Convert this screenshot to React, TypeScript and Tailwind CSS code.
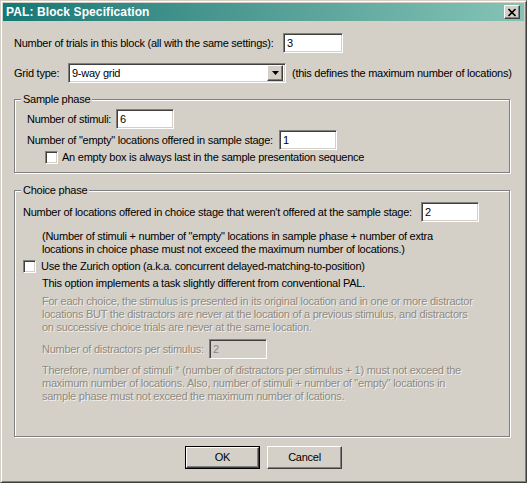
import React from "react";

const edit =
  "border border-t-[#808080] border-l-[#808080] border-b-white border-r-white shadow-[inset_1px_1px_0_#404040,inset_-1px_-1px_0_#d4d0c8]";
const raised =
  "border border-t-white border-l-white border-b-[#404040] border-r-[#404040] shadow-[inset_-1px_-1px_0_#808080]";
const etched =
  "border border-[#808080] shadow-[inset_1px_1px_0_#ffffff,1px_1px_0_#ffffff]";
const dis = "text-[#8e8a82] [text-shadow:1px_1px_0_#f4f2ee]";

function Edit({ value, w, disabled }: { value: string; w: string; disabled?: boolean }) {
  return (
    <div
      className={`${edit} ${w} h-[20px] flex items-center pl-[3px] ${
        disabled ? "bg-[#d4d0c8] text-[#8e8a82]" : "bg-white"
      }`}
    >
      {value}
    </div>
  );
}

function Check() {
  return <div className={`${edit} w-[13px] h-[13px] bg-white shrink-0`} />;
}

export default function App() {
  return (
    <div className="w-[527px] h-[483px] bg-[#d4d0c8] font-['Liberation_Sans',Arial,sans-serif] text-[11px] leading-[13px] tracking-[-0.25px] text-black">
      <div className="w-full h-full border border-t-[#d4d0c8] border-l-[#d4d0c8] border-b-[#404040] border-r-[#404040] shadow-[inset_1px_1px_0_#ffffff,inset_-1px_-1px_0_#808080] p-[2px] flex flex-col">
        {/* Title bar */}
        <div className="h-[18px] flex items-center bg-linear-to-r from-[#127876] to-[#84c4b6] pl-[3px] pr-[4px]">
          <span className="flex-1 text-white font-bold text-[12px] tracking-[0.1px]">
            PAL: Block Specification
          </span>
          <div className={`${raised} bg-[#d4d0c8] w-[16px] h-[14px] flex items-center justify-center`}>
            <svg width="10" height="9" viewBox="0 0 10 9">
              <path d="M1.5 1 L8.5 8 M8.5 1 L1.5 8" stroke="#000" strokeWidth="1.7" />
            </svg>
          </div>
        </div>

        <div className="pl-[11px] flex flex-col">
          {/* Row 1 */}
          <div className="mt-[12px] h-[20px] flex items-center">
            <span className="w-[269px]">Number of trials in this block (all with the same settings):</span>
            <Edit value="3" w="w-[60px]" />
          </div>

          {/* Row 2 */}
          <div className="mt-[10px] h-[20px] flex items-center">
            <span className="w-[54px]">Grid type:</span>
            <div className={`${edit} w-[218px] h-[20px] bg-white flex items-center p-[2px]`}>
              <span className="flex-1 pl-[1px]">9-way grid</span>
              <div className={`${raised} bg-[#d4d0c8] w-[16px] h-[16px] flex items-center justify-center`}>
                <svg width="7" height="4" viewBox="0 0 7 4">
                  <path d="M0 0 H7 L3.5 4 Z" fill="#000" />
                </svg>
              </div>
            </div>
            <span className="ml-[6px]">(this defines the maximum number of locations)</span>
          </div>

          {/* Sample phase */}
          <fieldset className={`${etched} mt-[10px] w-[496px] pl-[6px] pb-[8px]`}>
            <legend className="px-[2px] leading-[13px] bg-[#d4d0c8]">Sample phase</legend>
            <div className="pl-[6px] flex flex-col">
              <div className="mt-[3px] h-[20px] flex items-center">
                <span className="w-[89px]">Number of stimuli:</span>
                <Edit value="6" w="w-[58px]" />
              </div>
              <div className="mt-[1px] h-[20px] flex items-center">
                <span className="w-[252px]">Number of "empty" locations offered in sample stage:</span>
                <Edit value="1" w="w-[58px]" />
              </div>
              <div className="mt-[1px] h-[13px] flex items-center ml-[18px]">
                <Check />
                <span className="ml-[4px]">An empty box is always last in the sample presentation sequence</span>
              </div>
            </div>
          </fieldset>

          {/* Choice phase */}
          <fieldset className={`${etched} mt-[11px] w-[496px] pl-[6px] pb-[33px]`}>
            <legend className="px-[2px] leading-[13px] bg-[#d4d0c8]">Choice phase</legend>
            <div className="pl-[2px] flex flex-col">
              <div className="mt-[5px] h-[20px] flex items-center">
                <span className="w-[398px]">
                  Number of locations offered in choice stage that weren't offered at the sample stage:
                </span>
                <Edit value="2" w="w-[58px]" />
              </div>
              <div className="mt-[8px] ml-[19px] flex flex-col">
                <span>(Number of stimuli + number of "empty" locations in sample phase + number of extra</span>
                <span>locations in choice phase must not exceed the maximum number of locations.)</span>
              </div>
              <div className="mt-[4px] h-[13px] flex items-center">
                <Check />
                <span className="ml-[5px]">Use the Zurich option (a.k.a. concurrent delayed-matching-to-position)</span>
              </div>
              <div className="mt-[4px] ml-[19px]">
                This option implements a task slightly different from conventional PAL.
              </div>
              <div className={`mt-[5px] ml-[19px] flex flex-col ${dis}`}>
                <span>For each choice, the stimulus is presented in its original location and in one or more distractor</span>
                <span>locations BUT the distractors are never at the location of a previous stimulus, and distractors</span>
                <span>on successive choice trials are never at the same location.</span>
              </div>
              <div className="mt-[5px] ml-[19px] h-[20px] flex items-center">
                <span className={`w-[167px] ${dis}`}>Number of distractors per stimulus:</span>
                <Edit value="2" w="w-[58px]" disabled />
              </div>
              <div className={`mt-[5px] ml-[19px] flex flex-col ${dis}`}>
                <span>Therefore, number of stimuli * (number of distractors per stimulus + 1) must not exceed the</span>
                <span>maximum number of locations. Also, number of stimuli + number of "empty" locations in</span>
                <span>sample phase must not exceed the maximum number of lcations.</span>
              </div>
            </div>
          </fieldset>
        </div>

        {/* Buttons */}
        <div className="mt-[9px] flex justify-center gap-[7px]">
          <div className="w-[75px] h-[23px] border border-black">
            <div className={`${raised} w-full h-full flex items-center justify-center`}>OK</div>
          </div>
          <div className={`${raised} w-[75px] h-[23px] flex items-center justify-center`}>Cancel</div>
        </div>
      </div>
    </div>
  );
}
